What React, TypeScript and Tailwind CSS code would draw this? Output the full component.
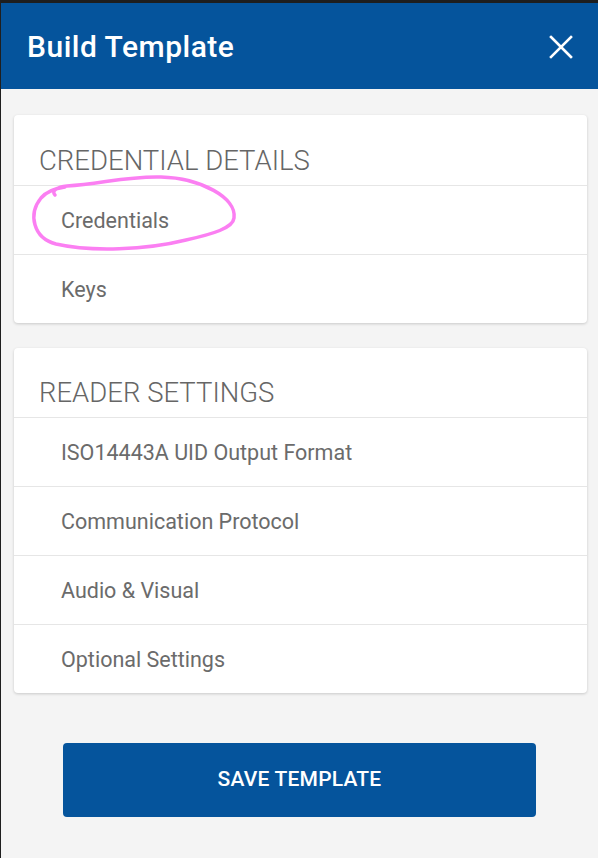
import React from "react";

const rowsA = ["Credentials", "Keys"];
const rowsB = [
  "ISO14443A UID Output Format",
  "Communication Protocol",
  "Audio & Visual",
  "Optional Settings",
];

function Card({ title, rows, headerPt }: { title: string; rows: string[]; headerPt: string }) {
  return (
    <div className="mx-[11px] ml-[13px] bg-white rounded-[4px] shadow-[0_1px_3px_rgba(0,0,0,0.18)]">
      <div className={`${headerPt} pb-[9px] pl-[25px] text-[27.5px] leading-[30px] font-light text-[#666666]`}>
        {title}
      </div>
      {rows.map((r) => (
        <div
          key={r}
          className="h-[69px] border-t border-[#e6e6e6] pl-[47px] pt-[2px] flex items-center text-[21.5px] text-[#6b6b6b]"
        >
          {r}
        </div>
      ))}
    </div>
  );
}

export default function App() {
  return (
    <div
      className="relative w-[598px] h-[858px] bg-[#f4f4f4] border-l border-[#1f1f1f] overflow-hidden"
      style={{ fontFamily: "Roboto, 'Noto Sans', sans-serif" }}
    >
      <div className="h-[3px] bg-[#1e1e1e]" />
      <div className="h-[86px] bg-[#05549c] flex items-center justify-between pl-[26px] pr-[25px]">
        <div className="text-white text-[30px] font-medium leading-none tracking-[0.5px] mt-[2px]">Build Template</div>
        <svg width="24" height="24" viewBox="0 0 24 24" className="mt-[1px]">
          <path d="M2 2 L22 22 M22 2 L2 22" stroke="white" strokeWidth="2.6" strokeLinecap="square" />
        </svg>
      </div>
      <div className="mt-[26px] flex flex-col gap-[25px]">
        <Card title="CREDENTIAL DETAILS" rows={rowsA} headerPt="pt-[31px]" />
        <Card title="READER SETTINGS" rows={rowsB} headerPt="pt-[30px]" />
      </div>
      <div className="mt-[50px] flex justify-center">
        <button className="w-[473px] h-[74px] rounded-[4px] bg-[#05549c] text-white text-[21px] font-medium tracking-[0.2px]">
          SAVE TEMPLATE
        </button>
      </div>
      <svg className="absolute left-0 top-0 pointer-events-none" width="598" height="858">
        <path
          d="M54 195 C 50 191, 56 187, 66 186 C 100 184, 125 176, 160 177 C 200 178, 236 198, 233 218 C 232 228, 212 234, 185 240 C 145 250, 90 252, 55 244 C 32 238, 27 214, 40 198 C 46 191, 56 188, 64 187"
          fill="none"
          stroke="#fb7ff2"
          strokeWidth="3.5"
          strokeLinecap="round"
        />
      </svg>
    </div>
  );
}
